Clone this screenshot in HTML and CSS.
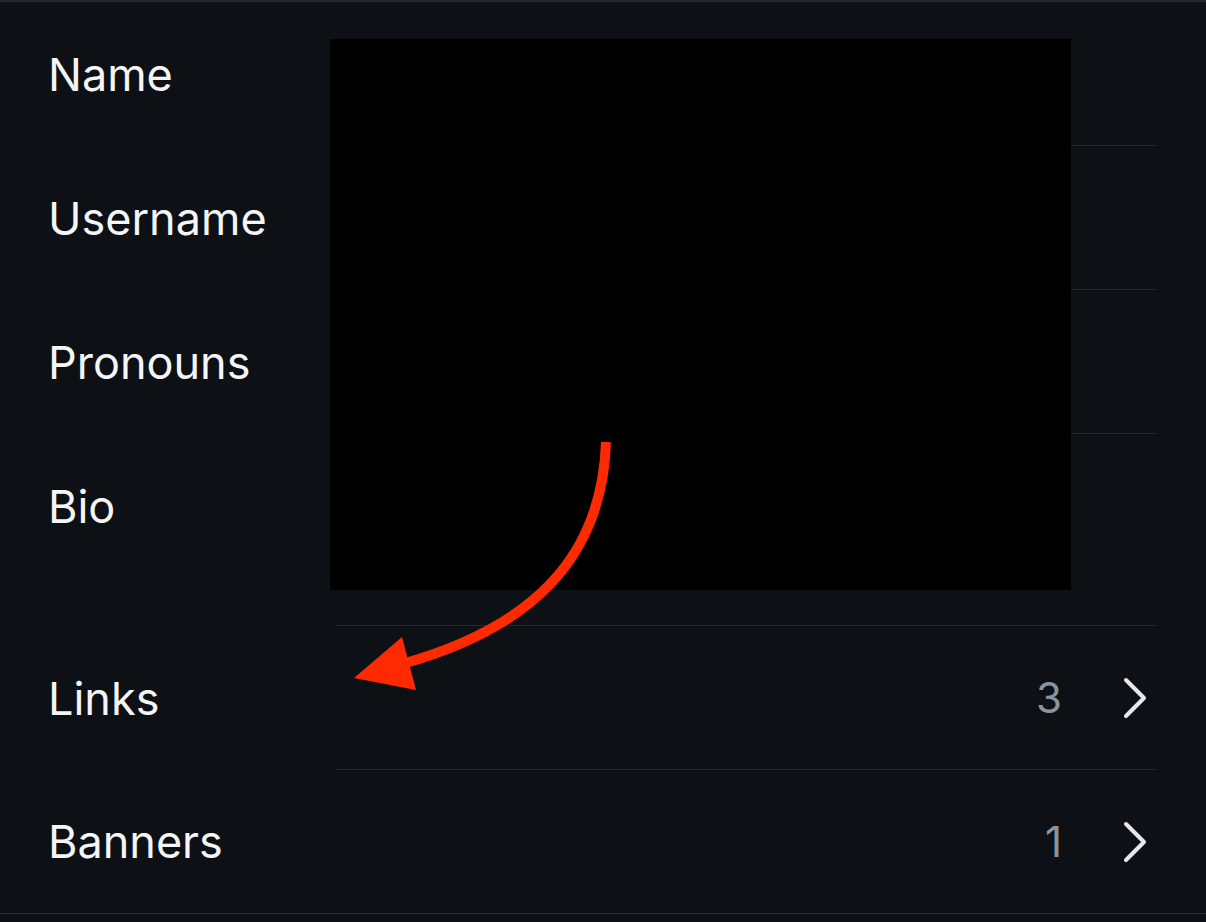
FILE: index.html
```html
<!DOCTYPE html>
<html lang="en">
<head>
    <meta charset="UTF-8">
    <meta name="viewport" content="width=device-width, initial-scale=1.0">
    <title>Edit Profile</title>
    <link rel="stylesheet" href="styles.css">
</head>
<body>

<div class="profile-form">
    <div class="row">
        <div class="label">Name</div>
        <div class="field"></div>
    </div>
    <div class="row">
        <div class="label">Username</div>
        <div class="field"></div>
    </div>
    <div class="row">
        <div class="label">Pronouns</div>
        <div class="field"></div>
    </div>
    <div class="row bio-row">
        <div class="label">Bio</div>
        <div class="field"></div>
    </div>
    <div class="row">
        <div class="label">Links</div>
        <div class="field">
            <span class="count">3</span>
            <svg class="chevron" width="26" height="44" viewBox="0 0 26 44">
                <path d="M4 4 L22 22 L4 40" fill="none" stroke="#e6e8eb" stroke-width="4" stroke-linecap="round" stroke-linejoin="round"/>
            </svg>
        </div>
    </div>
    <div class="row last">
        <div class="label">Banners</div>
        <div class="field">
            <span class="count">1</span>
            <svg class="chevron" width="26" height="44" viewBox="0 0 26 44">
                <path d="M4 4 L22 22 L4 40" fill="none" stroke="#e6e8eb" stroke-width="4" stroke-linecap="round" stroke-linejoin="round"/>
            </svg>
        </div>
    </div>

    <!-- redacted area -->
    <div class="redacted"></div>

    <!-- annotation arrow -->
    <svg class="arrow" width="1206" height="922" viewBox="0 0 1206 922">
        <path d="M606 442 C 602 560, 530 628, 402 664" fill="none" stroke="#ff2a00" stroke-width="10"/>
        <polygon points="354,678 402,637 416,690" fill="#ff2a00"/>
    </svg>
</div>

</body>
</html>
```

FILE: styles.css
```css
body {
    margin: 0;
    background-color: #0d1015;
    font-family: Inter, "Noto Sans", sans-serif;
    color: #f4f5f6;
}
.profile-form {
    position: relative;
    border-top: 2px solid #25282d;
    border-bottom: 1px solid #2a2d32;
}
.row {
    display: flex;
    height: 144px;
}
.bio-row {
    height: 192px;
}
.last {
    height: 143px;
}
.label {
    width: 288px;
    height: 144px;
    padding-left: 48px;
    display: flex;
    align-items: center;
    font-size: 45px;
}
.last .label {
    height: 143px;
}
.field {
    flex: 1;
    margin-right: 49px;
    border-bottom: 1px solid #25282d;
    display: flex;
    align-items: center;
    justify-content: flex-end;
    padding-right: 9px;
}
.last .field {
    border-bottom: none;
}
.count {
    font-size: 42px;
    color: #8d939b;
    margin-right: 60px;
}
.chevron {
    display: block;
}
.redacted {
    position: absolute;
    left: 330px;
    top: 37px;
    width: 741px;
    height: 551px;
    background-color: #000;
}
.arrow {
    position: absolute;
    left: 0;
    top: -2px;
}
```
